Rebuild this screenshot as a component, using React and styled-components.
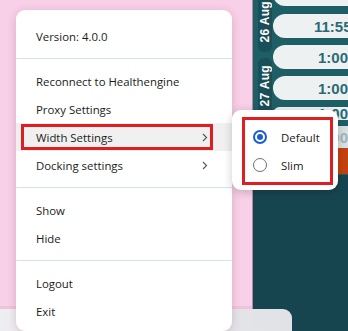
import React from "react"
import styled, { createGlobalStyle } from "styled-components"

const GlobalStyle = createGlobalStyle`
  html, body {
    margin: 0;
    padding: 0;
    overflow: hidden;
  }
  body {
    font-family: "Open Sans", "Noto Sans", sans-serif;
  }
`

const Page = styled.div`
  position: relative;
  width: 348px;
  height: 331px;
  overflow: hidden;
  display: grid;
  grid-template-columns: 252px 40px 1fr;
  grid-template-rows: 1fr 22px;
`

const PinkArea = styled.div`
  grid-column: 1;
  grid-row: 1;
  background: #f8d0e7;
  border-bottom: 3px solid #efc4db;
`

const TealPanel = styled.div`
  grid-column: 2 / 4;
  grid-row: 1 / 3;
  display: flex;
  flex-direction: column;
  background: #17454f;
  border-left: 1px solid #b98aa6;
  overflow: hidden;
`

const Schedule = styled.div`
  height: 175px;
  display: flex;
  gap: 1px;
  background: #1e5f66;
  padding-left: 5px;
`

const DateCol = styled.div`
  width: 24px;
  display: flex;
  flex-direction: column;
  gap: 6px;
`

const DateBox = styled.div`
  height: ${(p) => p.$h}px;
  flex: ${(p) => (p.$h ? "none" : "1")};
  background: #1a4e58;
  border-radius: ${(p) => (p.$first ? "0 0 6px 6px" : "6px 6px 0 0")};
  display: flex;
  align-items: ${(p) => (p.$first ? "flex-end" : "flex-start")};
  justify-content: center;
  padding: ${(p) => (p.$first ? "0 0 10px" : "7px 0 0")};
  box-sizing: border-box;
`

const DateText = styled.span`
  writing-mode: vertical-rl;
  transform: rotate(180deg);
  color: #ffffff;
  font-family: "Liberation Sans", Arial, sans-serif;
  font-weight: 700;
  font-size: 12px;
  letter-spacing: 0.3px;
  white-space: nowrap;
`

const Rows = styled.div`
  flex: 1;
  display: flex;
  flex-direction: column;
  margin-top: -18px;
`

const Slot = styled.div`
  flex: none;
  height: ${(p) => p.$h}px;
  margin-top: ${(p) => p.$gap}px;
  width: 120px;
  background: ${(p) => p.$bg};
  border-radius: ${(p) => (p.$pill ? "12px 0 0 12px" : "0")};
  color: ${(p) => p.$color || "#2b6a75"};
  font-family: "Liberation Sans", Arial, sans-serif;
  font-weight: 700;
  font-size: 15px;
  display: flex;
  align-items: center;
  padding-left: ${(p) => p.$indent ?? 45}px;
  box-sizing: border-box;
  white-space: nowrap;
`

const Rest = styled.div`
  flex: 1;
`

const BottomBar = styled.div`
  grid-column: 1 / 3;
  grid-row: 2;
  z-index: 1;
  background: linear-gradient(90deg, #eeeef1, #e1e2e6);
  border-top-right-radius: 9px;
`

const Menu = styled.div`
  position: absolute;
  left: 16px;
  top: 10px;
  width: 216px;
  height: 321px;
  z-index: 2;
  background: #ffffff;
  border-radius: 9px;
  box-shadow: 0 2px 10px rgba(120, 40, 80, 0.22);
  padding-top: 12px;
  box-sizing: border-box;
`

const Item = styled.div`
  position: relative;
  height: 28px;
  display: flex;
  align-items: center;
  justify-content: space-between;
  padding: 0 24px 0 20px;
  font-size: 11.4px;
  color: #1b1b1b;
  background: ${(p) => (p.$active ? "#f0f0f0" : "transparent")};
`

const Separator = styled.div`
  height: 1px;
  margin: 8px 0;
  background: #d3e3f5;
`

const Outline = styled.div`
  position: absolute;
  left: ${(p) => p.$x}px;
  top: ${(p) => p.$y}px;
  width: ${(p) => p.$w}px;
  height: ${(p) => p.$h}px;
  border: 3px solid #e01e22;
  box-sizing: border-box;
  pointer-events: none;
`

const SubMenu = styled.div`
  position: absolute;
  left: 232px;
  top: 110px;
  width: 106px;
  height: 80px;
  z-index: 3;
  background: #ffffff;
  border-radius: 9px;
  box-shadow: 0 2px 10px rgba(0, 0, 0, 0.2);
  padding-top: 13px;
  box-sizing: border-box;
`

const RadioRow = styled.div`
  height: 28px;
  display: flex;
  align-items: center;
  gap: 14px;
  padding-left: 21px;
  font-size: 11.4px;
  color: #1b1b1b;
`

const Radio = styled.span`
  width: 14px;
  height: 14px;
  border-radius: 50%;
  box-sizing: border-box;
  border: ${(p) => (p.$on ? "2px solid #1a5fd1" : "1.5px solid #707070")};
  display: flex;
  align-items: center;
  justify-content: center;
  &::after {
    content: "";
    width: 6px;
    height: 6px;
    border-radius: 50%;
    background: ${(p) => (p.$on ? "#1a5fd1" : "transparent")};
  }
`

const Chevron = () => (
  <svg width="6" height="9" viewBox="0 0 6 9">
    <polyline points="1,1 4.5,4.5 1,8" fill="none" stroke="#5a5a5a" strokeWidth="1.2" />
  </svg>
)

const slots = [
  { h: 24, gap: 0, bg: "#eef1f1", pill: true },
  { h: 24, gap: 8, bg: "#eef1f1", pill: true, text: "11:55", indent: 41 },
  { h: 24, gap: 7, bg: "#eef1f1", pill: true, text: "1:00" },
  { h: 24, gap: 7, bg: "#eef1f1", pill: true, text: "1:00" },
  { h: 13, gap: 7, bg: "#eef1f1", pill: true, text: "1:00" },
  { h: 22, gap: 6, bg: "#d9e1e2", text: "1:00", color: "#9fb7bb" },
  { h: 26, gap: 0, bg: "#c4420f", text: "Late", color: "#ffffff", indent: 32 },
]

export default function App() {
  return (
    <>
      <GlobalStyle />
      <Page>
        <PinkArea />
        <TealPanel>
          <Schedule>
            <DateCol>
              <DateBox $first $h={52}>
                <DateText>26 Aug</DateText>
              </DateBox>
              <DateBox>
                <DateText>27 Aug</DateText>
              </DateBox>
            </DateCol>
            <Rows>
              {slots.map((s, i) => (
                <Slot
                  key={i}
                  $h={s.h}
                  $gap={s.gap}
                  $bg={s.bg}
                  $pill={s.pill}
                  $color={s.color}
                  $indent={s.indent}
                >
                  {s.text}
                </Slot>
              ))}
            </Rows>
          </Schedule>
          <Rest />
        </TealPanel>
        <BottomBar />

        <Menu>
          <Item>Version: 4.0.0</Item>
          <Separator />
          <Item>Reconnect to Healthengine</Item>
          <Item>Proxy Settings</Item>
          <Item $active>
            Width Settings
            <Chevron />
            <Outline $x={5} $y={1} $w={192} $h={26} />
          </Item>
          <Item>
            Docking settings
            <Chevron />
          </Item>
          <Separator />
          <Item>Show</Item>
          <Item>Hide</Item>
          <Separator />
          <Item>Logout</Item>
          <Item>Exit</Item>
        </Menu>

        <SubMenu>
          <RadioRow>
            <Radio $on />
            Default
          </RadioRow>
          <RadioRow>
            <Radio />
            Slim
          </RadioRow>
          <Outline $x={10} $y={7} $w={91} $h={68} />
        </SubMenu>
      </Page>
    </>
  )
}
